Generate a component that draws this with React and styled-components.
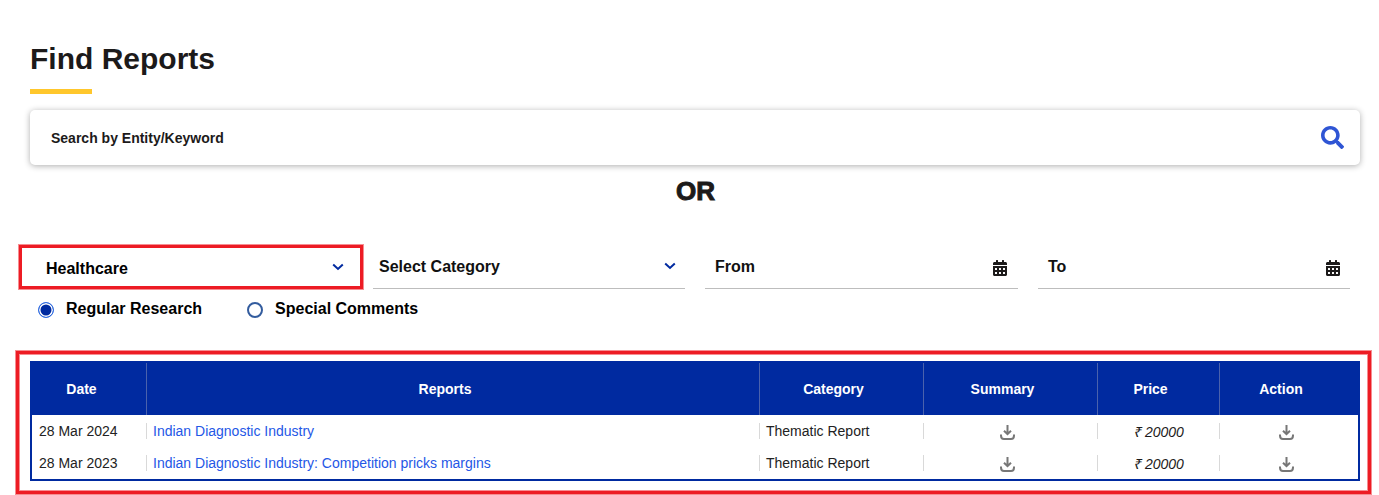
import React from 'react';
import styled, { createGlobalStyle } from 'styled-components';
import { FaSearch, FaCalendarAlt } from 'react-icons/fa';

const GlobalStyle = createGlobalStyle`
  html, body {
    margin: 0;
    padding: 0;
    background: #fff;
    font-family: "Liberation Sans", Arial, sans-serif;
    color: #1a1a1a;
  }
  * { box-sizing: border-box; }
`;

const Page = styled.div`
  width: 1379px;
  height: 495px;
  overflow: hidden;
  padding-top: 41px;
`;

const Heading = styled.div`
  margin: 0 19px 16px 30px;
`;

const Title = styled.h1`
  margin: 0;
  font-size: 30px;
  line-height: 36px;
  font-weight: 700;
  color: #1c1a1a;
`;

const TitleBar = styled.div`
  width: 62px;
  height: 5px;
  margin-top: 12px;
  background: #ffc72c;
`;

const SearchCard = styled.div`
  display: flex;
  align-items: center;
  justify-content: space-between;
  width: 1330px;
  height: 55px;
  margin-left: 30px;
  padding: 0 16px 0 21px;
  background: #fff;
  border-radius: 5px;
  box-shadow: 0 1px 6px rgba(0, 0, 0, 0.32);
  color: #2f55d4;
`;

const SearchLabel = styled.span`
  font-size: 14px;
  line-height: 18px;
  padding-top: 1px;
  font-weight: 700;
  color: #1c1a1a;
`;

const OrText = styled.div`
  width: 1391px;
  margin-top: 11px;
  text-align: center;
  font-size: 26px;
  line-height: 30px;
  font-weight: 700;
  color: #1c1a1a;
  -webkit-text-stroke: 1px #1c1a1a;
`;

const FilterRow = styled.div`
  display: flex;
  align-items: flex-start;
  min-height: 46px;
  margin: 38px 0 0 18px;
`;

const Highlighted = styled.div`
  display: flex;
  align-items: center;
  justify-content: space-between;
  width: 344px;
  height: 44px;
  margin: 1px 10px 0 1px;
  padding: 0 16px 0 24px;
  border: 3px solid #ed1c24;
  box-shadow: 0 0 0 1px rgba(237, 28, 36, 0.5);
`;

const Field = styled.div`
  display: flex;
  align-items: center;
  justify-content: space-between;
  width: ${(p) => p.$width}px;
  height: 45px;
  margin-right: 20px;
  padding: 0 ${(p) => p.$right}px 0 ${(p) => p.$left}px;
  border-bottom: 1px solid #bdbdbd;
`;

const FieldText = styled.span`
  font-size: 16px;
  font-weight: 700;
  color: #111;
  position: relative;
  top: 1px;
`;

const SelectedText = styled.span`
  font-size: 16px;
  font-weight: 700;
  color: #000;
  position: relative;
  top: 2px;
`;

const CalendarIcon = styled(FaCalendarAlt)`
  width: 14px;
  height: 16px;
  color: #1c1a1a;
  position: relative;
  top: 2px;
`;

const Chevron = styled.svg`
  width: 12px;
  height: 8px;
  fill: none;
  stroke: #002aa0;
  stroke-width: 2;
`;

const RadioRow = styled.div`
  display: flex;
  align-items: center;
  height: 20px;
  margin: 9px 0 0 38px;
`;

const RadioItem = styled.div`
  display: flex;
  align-items: center;
  margin-right: ${(p) => p.$gap}px;
`;

const RadioMark = styled.span`
  display: block;
  width: 16px;
  height: 16px;
  margin-right: 12px;
  border-radius: 50%;
  border: ${(p) => (p.$checked ? '1.5px solid #2f6fe8' : '2px solid #335c9e')};
  background: ${(p) => (p.$checked ? '#002aa0' : '#fff')};
  box-shadow: ${(p) => (p.$checked ? 'inset 0 0 0 1.5px #fff' : 'none')};
  position: relative;
  top: 1px;
`;

const RadioText = styled.span`
  font-size: 16px;
  font-weight: 700;
  color: #000;
`;

const TableFrame = styled.div`
  width: 1355px;
  height: 143px;
  margin: 32px 0 0 16px;
  padding: 7px 0 0 11px;
  border: 3px solid #ed1c24;
  box-shadow: 0 0 0 1px rgba(237, 28, 36, 0.5), inset 0 0 0 1px rgba(237, 28, 36, 0.5);
`;

const ReportTable = styled.table`
  width: 1330px;
  table-layout: fixed;
  border-collapse: separate;
  border-spacing: 0;
  border: 2px solid #002aa0;
`;

const HeadRow = styled.tr`
  height: 52px;
  background: #002aa0;
`;

const HeadCell = styled.th`
  padding: 0 16px 0 0;
  font-size: 14px;
  font-weight: 700;
  color: #fff;
  text-align: center;
  border-left: 1px solid ${(p) => (p.$first ? '#002aa0' : '#4a62ac')};
`;

const BodyRow = styled.tr`
  height: 32px;
`;

const BodyCell = styled.td`
  padding: 0;
  font-size: 14px;
  color: #222;
`;

const CellInner = styled.div`
  display: flex;
  align-items: center;
  justify-content: ${(p) => (p.$center ? 'center' : 'flex-start')};
  height: 16px;
  padding-left: ${(p) => (p.$center ? 0 : 6)}px;
  padding-right: ${(p) => (p.$icon ? 6 : 0)}px;
  border-left: 1px solid ${(p) => (p.$first ? 'transparent' : '#d9d9d9')};
`;

const ReportLink = styled.a`
  color: #2457e6;
  text-decoration: none;
`;

const Price = styled.span`
  font-style: italic;
  color: #1c1a1a;
`;

const DownloadSvg = styled.svg`
  width: 15px;
  height: 15px;
  fill: none;
  stroke: #777;
  stroke-width: 2;
  position: relative;
  top: 1px;
`;

const DownloadIcon = () => (
  <DownloadSvg viewBox="0 0 15 15">
    <path d="M7.5 0V9M4 5.8L7.5 9.2L11 5.8" />
    <path d="M1 9.5V10.5C1 12.6 2.2 14 4 14H11C12.8 14 14 12.6 14 10.5V9.5" />
  </DownloadSvg>
);

const ChevronDown = () => (
  <Chevron viewBox="0 0 12 8">
    <path d="M1.2 1.5L6 6L10.8 1.5" />
  </Chevron>
);

const COLUMNS = [
  { name: 'Date', width: 114 },
  { name: 'Reports', width: 613 },
  { name: 'Category', width: 164 },
  { name: 'Summary', width: 174 },
  { name: 'Price', width: 122 },
  { name: 'Action', width: 139 },
];

const REPORTS = [
  { date: '28 Mar 2024', title: 'Indian Diagnostic Industry' },
  { date: '28 Mar 2023', title: 'Indian Diagnostic Industry: Competition pricks margins' },
];

export default function App() {
  return (
    <Page>
      <GlobalStyle />
      <Heading>
        <Title>Find Reports</Title>
        <TitleBar />
      </Heading>

      <SearchCard>
        <SearchLabel>Search by Entity/Keyword</SearchLabel>
        <FaSearch size={23} />
      </SearchCard>

      <OrText>OR</OrText>

      <FilterRow>
        <Highlighted>
          <SelectedText>Healthcare</SelectedText>
          <ChevronDown />
        </Highlighted>
        <Field $width={312} $left={6} $right={9}>
          <FieldText>Select Category</FieldText>
          <ChevronDown />
        </Field>
        <Field $width={313} $left={10} $right={11}>
          <FieldText>From</FieldText>
          <CalendarIcon />
        </Field>
        <Field $width={312} $left={10} $right={10}>
          <FieldText>To</FieldText>
          <CalendarIcon />
        </Field>
      </FilterRow>

      <RadioRow>
        <RadioItem $gap={45}>
          <RadioMark $checked />
          <RadioText>Regular Research</RadioText>
        </RadioItem>
        <RadioItem $gap={0}>
          <RadioMark />
          <RadioText>Special Comments</RadioText>
        </RadioItem>
      </RadioRow>

      <TableFrame>
        <ReportTable>
          <colgroup>
            {COLUMNS.map((col) => (
              <col key={col.name} style={{ width: col.width }} />
            ))}
          </colgroup>
          <thead>
            <HeadRow>
              {COLUMNS.map((col, i) => (
                <HeadCell key={col.name} $first={i === 0}>
                  {col.name}
                </HeadCell>
              ))}
            </HeadRow>
          </thead>
          <tbody>
            {REPORTS.map((report) => (
              <BodyRow key={report.date}>
                <BodyCell>
                  <CellInner $first>{report.date}</CellInner>
                </BodyCell>
                <BodyCell>
                  <CellInner>
                    <ReportLink href="#">{report.title}</ReportLink>
                  </CellInner>
                </BodyCell>
                <BodyCell>
                  <CellInner>Thematic Report</CellInner>
                </BodyCell>
                <BodyCell>
                  <CellInner $center $icon>
                    <DownloadIcon />
                  </CellInner>
                </BodyCell>
                <BodyCell>
                  <CellInner $center>
                    <Price>₹ 20000</Price>
                  </CellInner>
                </BodyCell>
                <BodyCell>
                  <CellInner $center $icon>
                    <DownloadIcon />
                  </CellInner>
                </BodyCell>
              </BodyRow>
            ))}
          </tbody>
        </ReportTable>
      </TableFrame>
    </Page>
  );
}
